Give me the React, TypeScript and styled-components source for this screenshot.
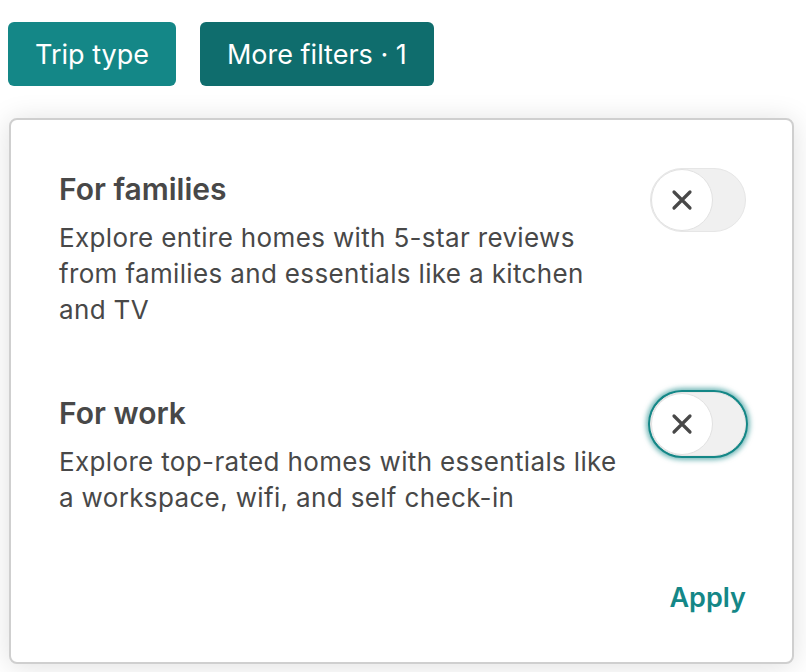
import React from "react";
import styled, { createGlobalStyle, css } from "styled-components";

const GlobalStyle = createGlobalStyle`
  html, body { margin: 0; padding: 0; background: #ffffff; }
  body { font-family: Inter, "Noto Sans", sans-serif; color: #484848; }
  * { box-sizing: border-box; }
`;

const Page = styled.div`
  width: 806px;
  height: 672px;
  overflow: hidden;
  padding: 22px 12px 0 8px;
`;

const Toolbar = styled.div`
  display: flex;
  gap: 24px;
`;

const FilterButton = styled.button<{ $active?: boolean }>`
  height: 64px;
  padding: 0 27px;
  border: none;
  border-radius: 6px;
  font-family: inherit;
  font-size: 27px;
  font-weight: 400;
  color: #ffffff;
  background: ${(p) => (p.$active ? "#0f6d6d" : "#148787")};
  cursor: pointer;
`;

const Panel = styled.div`
  margin: 32px 0 0 1px;
  width: 785px;
  height: 546px;
  border: 2px solid #cfcfcf;
  border-radius: 8px;
  background: #ffffff;
  box-shadow: 0 2px 28px rgba(0, 0, 0, 0.13);
  padding: 48px 46px 0 48px;
  display: flex;
  flex-direction: column;
`;

const Option = styled.div<{ $gap?: number }>`
  display: flex;
  justify-content: space-between;
  align-items: flex-start;
  gap: 16px;
  margin-bottom: ${(p) => p.$gap ?? 0}px;
`;

const OptionText = styled.div`
  padding-top: 3px;
  flex: 1;
  max-width: 580px;
`;

const Title = styled.div`
  font-size: 30px;
  line-height: 36px;
  font-weight: 600;
  color: #484848;
  margin-bottom: 13px;
`;

const Description = styled.div`
  font-size: 26px;
  line-height: 36px;
  font-weight: 400;
  letter-spacing: 0.35px;
  color: #484848;
`;

const Line = styled.span`
  display: block;
  white-space: nowrap;
`;

const Track = styled.button<{ $focused?: boolean }>`
  flex: none;
  width: 96px;
  height: 64px;
  padding: 0;
  border-radius: 32px;
  border: 1px solid #e6e6e6;
  background: #f0f0f0;
  display: flex;
  align-items: center;
  cursor: pointer;
  ${(p) =>
    p.$focused &&
    css`
      box-shadow: 0 0 0 2px #148787, 0 0 5px 4px rgba(20, 135, 135, 0.6);
    `}
`;

const Knob = styled.span`
  width: 62px;
  height: 62px;
  border-radius: 50%;
  background: #ffffff;
  border: 1px solid #e2e2e2;
  display: flex;
  align-items: center;
  justify-content: center;
`;

const Footer = styled.div`
  margin-top: auto;
  padding-bottom: 46px;
  display: flex;
  justify-content: flex-end;
`;

const ApplyButton = styled.button`
  border: none;
  background: none;
  padding: 0;
  font-family: inherit;
  font-size: 27px;
  line-height: 36px;
  font-weight: 600;
  color: #148787;
  cursor: pointer;
`;

const CrossIcon = () => (
  <svg width="22" height="22" viewBox="0 0 22 22" fill="none">
    <path d="M3 3 L19 19 M19 3 L3 19" stroke="#484848" strokeWidth="3.2" strokeLinecap="round" />
  </svg>
);

const Toggle = ({ focused }: { focused?: boolean }) => (
  <Track $focused={focused} aria-pressed="false">
    <Knob>
      <CrossIcon />
    </Knob>
  </Track>
);

const options = [
  {
    title: "For families",
    lines: [
      "Explore entire homes with 5-star reviews",
      "from families and essentials like a kitchen",
      "and TV",
    ],
    focused: false,
  },
  {
    title: "For work",
    lines: [
      "Explore top-rated homes with essentials like",
      "a workspace, wifi, and self check-in",
    ],
    focused: true,
  },
];

export default function App() {
  return (
    <>
      <GlobalStyle />
      <Page>
        <Toolbar>
          <FilterButton>Trip type</FilterButton>
          <FilterButton $active>More filters · 1</FilterButton>
        </Toolbar>
        <Panel>
          {options.map((o, i) => (
            <Option key={o.title} $gap={i === 0 ? 64 : 0}>
              <OptionText>
                <Title>{o.title}</Title>
                <Description>
                  {o.lines.map((l) => (
                    <Line key={l}>{l}</Line>
                  ))}
                </Description>
              </OptionText>
              <Toggle focused={o.focused} />
            </Option>
          ))}
          <Footer>
            <ApplyButton>Apply</ApplyButton>
          </Footer>
        </Panel>
      </Page>
    </>
  );
}
